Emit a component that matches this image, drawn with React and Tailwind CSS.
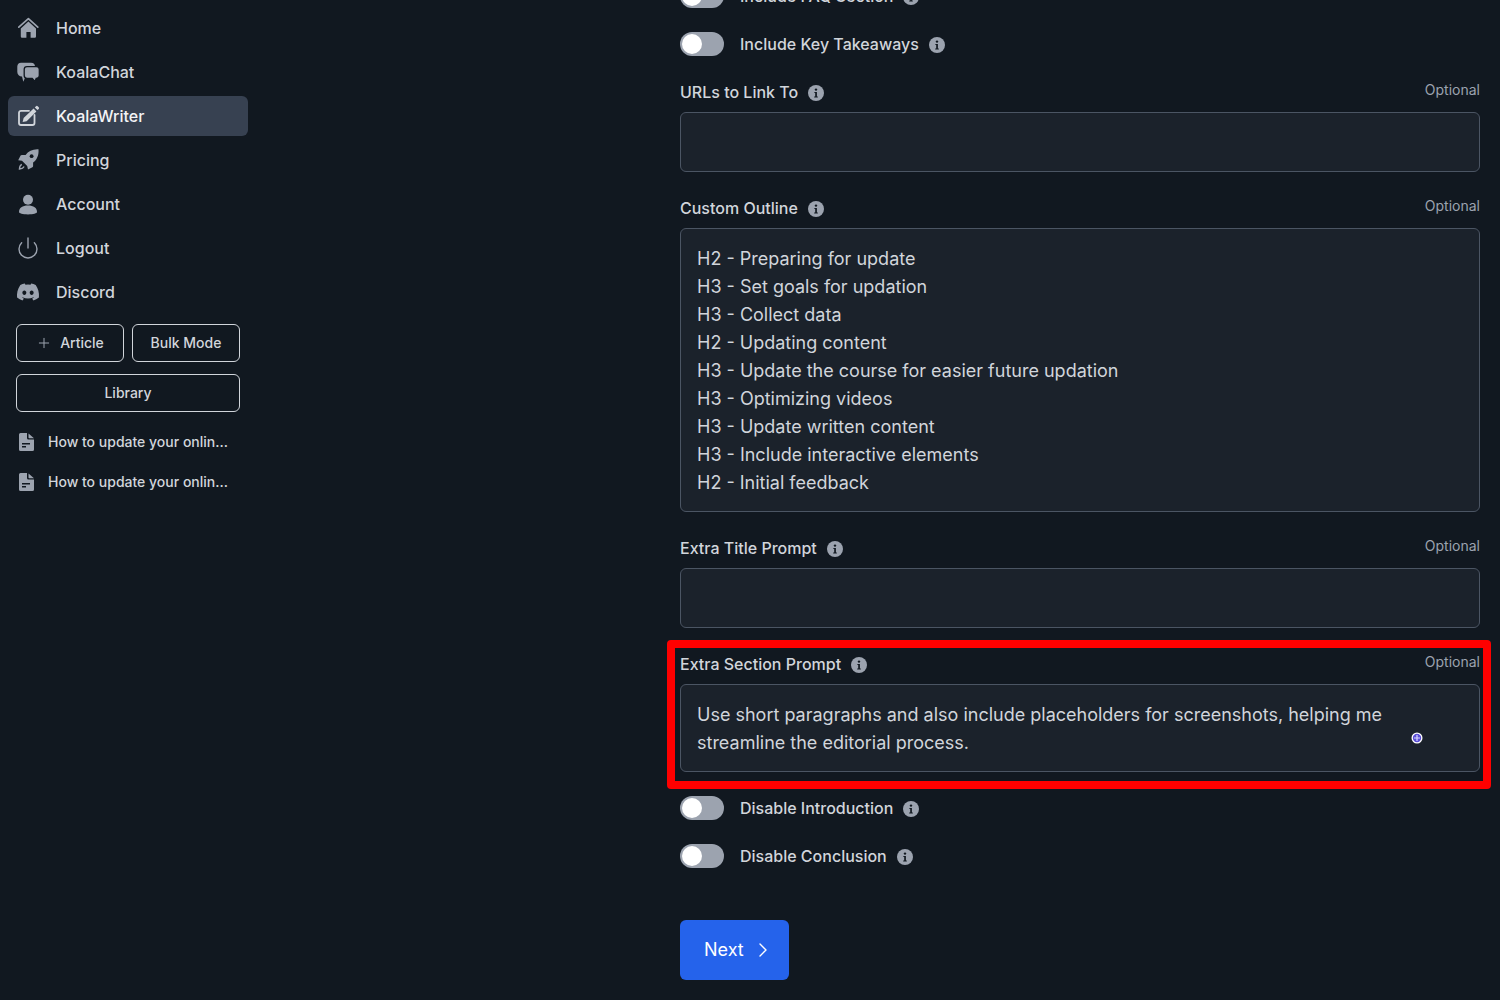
import { FaDiscord } from 'react-icons/fa'
import { FiPower } from 'react-icons/fi'
import { Plus, ChevronRight } from 'lucide-react'

const BG = '#111820'

function HomeIcon() {
  return (
    <svg width="24" height="24" viewBox="0 0 24 24" fill="currentColor">
      <path d="M2.8 11.2 12.4 2.6 21.8 11.2" fill="none" stroke="currentColor" strokeWidth="1.7" strokeLinecap="round" strokeLinejoin="round" />
      <path d="M4.8 12.6 12.4 5.6 20 12.6V20.6a1.2 1.2 0 0 1-1.2 1.2H14.6V16H10.4V21.8H6a1.2 1.2 0 0 1-1.2-1.2Z" />
    </svg>
  )
}

function ChatIcon() {
  return (
    <svg width="24" height="24" viewBox="0 0 24 24" fill="currentColor">
      <path d="M5 2.7h10a4 4 0 0 1 4 4v6a4 4 0 0 1-4 4H9.5L7.3 21.7 6 16.5A4.5 4.5 0 0 1 1.3 12V6.5A4 4 0 0 1 5 2.7Z" />
      <path d="M11 6.7h9.5a2.8 2.8 0 0 1 2.8 2.8v6a2.8 2.8 0 0 1-2.8 2.8h-.3L19 21.5l-2.8-3.2H11a2.8 2.8 0 0 1-2.8-2.8v-6A2.8 2.8 0 0 1 11 6.7Z" stroke={BG} strokeWidth="1.3" />
    </svg>
  )
}

function EditIcon() {
  return (
    <svg width="24" height="24" viewBox="0 0 24 24" fill="currentColor">
      <path d="M13 6.8H5a2 2 0 0 0-2 2V19a2 2 0 0 0 2 2h11.5a2 2 0 0 0 2-2v-8" fill="none" stroke="currentColor" strokeWidth="1.8" strokeLinecap="round" />
      <path d="M17.6 4.6 20.4 7.4 10.6 17.2 6.6 18 7.6 14Z" />
      <path d="M18.8 3.4 20 2.2a1.2 1.2 0 0 1 1.7 0l1 1a1.2 1.2 0 0 1 0 1.7l-1.2 1.2Z" />
    </svg>
  )
}

function RocketIcon() {
  return (
    <svg width="24" height="24" viewBox="0 0 24 24" fill="currentColor">
      <path d="M22.5 1.2c.5 6-1.6 10.6-5.4 13.2v3.6a1.4 1.4 0 0 1-.7 1.2l-4.4 2.4-.8-3.6-5.2-5.2-3.8-.6 2.4-4.6a1.4 1.4 0 0 1 1.2-.7h3.8C12.4 3 17 .8 22.5 1.2Z" />
      <circle cx="15.6" cy="8.2" r="1.9" fill={BG} />
      <path d="M5.8 16.4c-1.4.6-2.2 2-2.4 4.6 2.4-.2 4-.9 4.7-2.4" fill="none" stroke="currentColor" strokeWidth="1.3" />
    </svg>
  )
}

function UserIcon() {
  return (
    <svg width="24" height="24" viewBox="0 0 24 24" fill="currentColor">
      <circle cx="12" cy="7.8" r="5" />
      <path d="M3 20c0-4 3.4-6.4 9-6.4s9 2.4 9 6.4c0 1.4-3.6 2.4-9 2.4S3 21.4 3 20Z" />
    </svg>
  )
}

function DocIcon() {
  return (
    <svg width="15" height="18" viewBox="0 0 15 18" fill="currentColor">
      <path d="M1.5 0H8v5a1.5 1.5 0 0 0 1.5 1.5H15V16.5A1.5 1.5 0 0 1 13.5 18H1.5A1.5 1.5 0 0 1 0 16.5V1.5A1.5 1.5 0 0 1 1.5 0Z" />
      <path d="M9.5 .5 15 5.2H10.2a.7.7 0 0 1-.7-.7Z" />
      <rect x="3" y="10" width="8" height="1.5" fill={BG} />
      <rect x="3" y="13" width="4" height="1.5" fill={BG} />
    </svg>
  )
}

const NAV = [
  { label: 'Home', icon: <HomeIcon /> },
  { label: 'KoalaChat', icon: <ChatIcon /> },
  { label: 'KoalaWriter', icon: <EditIcon />, active: true },
  { label: 'Pricing', icon: <RocketIcon /> },
  { label: 'Account', icon: <UserIcon /> },
  { label: 'Logout', icon: <FiPower className="w-6 h-6" strokeWidth={1.4} /> },
  { label: 'Discord', icon: <FaDiscord className="w-6 h-6" /> },
]

const OUTLINE = [
  'H2 - Preparing for update',
  'H3 - Set goals for updation',
  'H3 - Collect data',
  'H2 - Updating content',
  'H3 - Update the course for easier future updation',
  'H3 - Optimizing videos',
  'H3 - Update written content',
  'H3 - Include interactive elements',
  'H2 - Initial feedback',
]

function Info() {
  return (
    <svg className="ml-[10px] mt-px shrink-0" width="16" height="16" viewBox="0 0 16 16">
      <circle cx="8" cy="8" r="8" fill="#9ca3af" />
      <circle cx="8" cy="4.6" r="1.2" fill={BG} />
      <path d="M6.4 6.9h2.5v4.5h.9v1.2H6.2v-1.2h1v-3.3h-.8Z" fill={BG} />
    </svg>
  )
}

function Toggle({ label }) {
  return (
    <div className="flex items-center h-6">
      <div className="w-11 h-6 rounded-full bg-[#9ca3af] p-[2px] shrink-0">
        <div className="w-5 h-5 rounded-full bg-white" />
      </div>
      <span className="ml-4 text-base font-medium text-[#d1d5db]">{label}</span>
      <Info />
    </div>
  )
}

function Field({ label, children }) {
  return (
    <div>
      <div className="flex justify-between h-6 mb-2">
        <div className="flex items-center text-base font-medium text-[#d1d5db]">
          {label}
          <Info />
        </div>
        <span className="text-sm text-[#9ca3af] leading-[20px]">Optional</span>
      </div>
      {children}
    </div>
  )
}

function Box({ children }) {
  return (
    <div className="border border-[#4b5563] rounded-md bg-[#1b222b] px-4 pt-4 pb-[14px] text-lg leading-7 text-[#d1d5db] min-h-[60px]">
      {children}
    </div>
  )
}

export default function App() {
  return (
    <div className="flex h-screen overflow-hidden bg-[#111820] font-['Inter',sans-serif]">
      {/* Sidebar */}
      <aside className="w-[256px] shrink-0 px-2 pt-2">
        <nav className="flex flex-col gap-1">
          {NAV.map(item => (
            <div key={item.label}
              className={`flex items-center h-10 rounded-md text-base font-medium ${item.active ? 'bg-[#374151] text-[#f3f4f6]' : 'text-[#d1d5db]'}`}>
              <span className={`w-10 mr-2 flex justify-center ${item.active ? 'text-[#d1d5db]' : 'text-[#9ca3af]'}`}>
                {item.icon}
              </span>
              {item.label}
            </div>
          ))}
        </nav>

        <div className="px-2 mt-3 flex flex-col gap-3">
          <div className="flex gap-2">
            <button className="flex-1 h-[38px] flex items-center justify-center gap-2 border border-[#d1d5db] rounded-md text-sm font-medium text-[#d1d5db]">
              <Plus className="w-4 h-4 text-[#9ca3af]" strokeWidth={1.5} />
              Article
            </button>
            <button className="flex-1 h-[38px] border border-[#d1d5db] rounded-md text-sm font-medium text-[#d1d5db]">
              Bulk Mode
            </button>
          </div>
          <button className="h-[38px] border border-[#d1d5db] rounded-md text-sm font-medium text-[#d1d5db]">
            Library
          </button>
        </div>

        <div className="mt-[10px] flex flex-col">
          {[0, 1].map(i => (
            <div key={i} className="flex items-center h-10 text-sm font-medium text-[#d1d5db]">
              <span className="w-10 pl-[11px] text-[#9ca3af]"><DocIcon /></span>
              How to update your onlin...
            </div>
          ))}
        </div>
      </aside>

      {/* Form, scrolled down */}
      <main className="ml-[424px] w-[800px] -mt-4 flex flex-col shrink-0">
        <div className="flex flex-col gap-6">
          <Toggle label="Include FAQ Section" />
          <Toggle label="Include Key Takeaways" />
          <Field label="URLs to Link To"><Box /></Field>
          <Field label="Custom Outline">
            <Box>{OUTLINE.map(line => <div key={line}>{line}</div>)}</Box>
          </Field>
          <Field label="Extra Title Prompt"><Box /></Field>
          <div className="relative">
            <Field label="Extra Section Prompt">
              <Box>Use short paragraphs and also include placeholders for screenshots, helping me streamline the editorial process.</Box>
            </Field>
            {/* red highlight drawn over the field */}
            <div className="absolute -left-[13px] -right-[11px] -top-[12px] -bottom-[17px] border-[8px] border-[#ff0000] rounded-[4px] pointer-events-none" />
            <svg className="absolute left-[731px] top-[80px]" width="12" height="12" viewBox="0 0 12 12">
              <circle cx="6" cy="6" r="5.5" fill="#fff" />
              <circle cx="6" cy="6" r="4.2" fill="#5b4fd6" />
              <path d="M6 3v6M3 6h6" stroke="#d8d4ff" strokeWidth="1.2" />
            </svg>
          </div>
          <Toggle label="Disable Introduction" />
          <Toggle label="Disable Conclusion" />
        </div>
        <button className="mt-[52px] w-[109px] h-[60px] shrink-0 bg-[#2563eb] rounded-md flex items-center pl-6 gap-[7px] text-lg text-white">
          Next
          <ChevronRight className="w-6 h-6" strokeWidth={1.4} />
        </button>
      </main>
    </div>
  )
}
